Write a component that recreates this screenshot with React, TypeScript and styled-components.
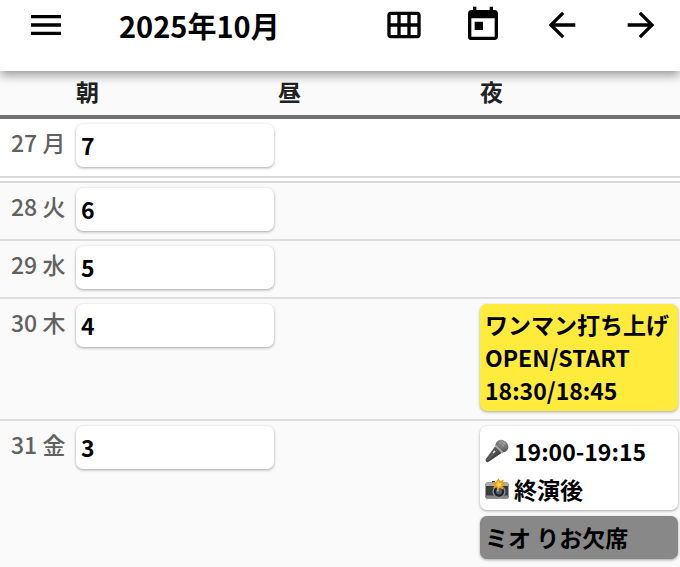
import React from 'react';
import styled, { createGlobalStyle } from 'styled-components';
import { MdArrowBack, MdArrowForward, MdCalendarViewMonth, MdMenu, MdToday } from 'react-icons/md';

const GlobalStyle = createGlobalStyle`
  * { box-sizing: border-box; }
  body {
    margin: 0;
    background: #fafafa;
    color: #000;
    font-family: "Noto Sans CJK JP", "Noto Sans", sans-serif;
    font-size: 23px;
    font-weight: 500;
    line-height: 33px;
  }
`;

const Page = styled.div`
  min-height: 100vh;
  overflow: hidden;
`;

const AppBar = styled.header`
  position: relative;
  z-index: 1;
  display: flex;
  align-items: center;
  padding: 0 0 21px 6px;
  background: #fff;
  box-shadow: 0 4px 10px rgba(0, 0, 0, 0.4);
`;

const IconButton = styled.button`
  display: flex;
  align-items: center;
  justify-content: center;
  width: 79px;
  height: 50px;
  padding: 0;
  border: 0;
  background: none;
  color: #000;
  font-size: 40px;
  cursor: pointer;
`;

const Title = styled.h1`
  flex: 1;
  margin: 0;
  padding-left: 34px;
  font-size: 29px;
  font-weight: 600;
  line-height: 44px;
  white-space: nowrap;
`;

const Calendar = styled.table`
  width: 100%;
  table-layout: fixed;
  border-collapse: separate;
  border-spacing: 0;
`;

const DateHead = styled.th`
  width: 74px;
  padding: 0;
  border-bottom: 4px solid #707070;
`;

const PeriodHead = styled.th`
  height: 48px;
  padding: 0 2px 3px;
  border-bottom: 4px solid #707070;
  color: #212121;
  font-weight: 600;
  text-align: left;
`;

const DateCell = styled.th`
  padding: 7px 0 0 11px;
  color: #616161;
  font-weight: 500;
  text-align: left;
  vertical-align: top;
  white-space: nowrap;
`;

const Slot = styled.td`
  padding: 5px 2px 8px;
  vertical-align: top;
`;

const DayRow = styled.tr<{ $today?: boolean }>`
  background: ${(p) => (p.$today ? '#fff' : '#fafafa')};

  > * {
    border-bottom: ${(p) => (p.$today ? '7px double #d8d8d8' : '2px solid #dedede')};
  }

  > ${Slot} {
    padding-bottom: ${(p) => (p.$today ? '9px' : '8px')};
  }

  &:last-child > * {
    border-bottom: 0;
  }
`;

const tones = { white: '#fff', yellow: '#ffeb3b', gray: '#888' };

const Card = styled.div<{ $tone?: keyof typeof tones; $compact?: boolean }>`
  padding: ${(p) => (p.$compact ? '4px 5px' : '5px')};
  border-radius: 7px;
  background: ${(p) => tones[p.$tone ?? 'white']};
  box-shadow: 0 1px 3px rgba(0, 0, 0, 0.35);
  font-weight: 600;
  white-space: nowrap;

  & + & {
    margin-top: 6px;
  }
`;

const Line = styled.div<{ $icon?: boolean }>`
  display: flex;
  align-items: center;
  gap: 5px;
  min-height: ${(p) => (p.$icon ? '38px' : '33px')};
  padding-top: ${(p) => (p.$icon ? '4px' : '0')};

  svg {
    flex: none;
  }
`;

function Microphone() {
  return (
    <svg width="24" height="24" viewBox="0 0 24 24" aria-hidden="true">
      <defs>
        <linearGradient id="mic-body" x1="0" y1="0" x2="1" y2="1">
          <stop offset="0" stopColor="#777" />
          <stop offset="1" stopColor="#222" />
        </linearGradient>
        <radialGradient id="mic-head" cx="0.4" cy="0.3" r="0.7">
          <stop offset="0" stopColor="#b5b5b5" />
          <stop offset="1" stopColor="#4a4a4a" />
        </radialGradient>
      </defs>
      <path d="M10 7.5.8 20q-.8 1.400.3 2.500 1.200 1.200 2.600.3L16.5 14Z" fill="url(#mic-body)" />
      <path d="M3 20.5 12 11" stroke="#777" strokeWidth="1" />
      <ellipse cx="17" cy="7" rx="6.7" ry="5.8" transform="rotate(40 17 7)" fill="url(#mic-head)" />
      <path d="m10 6 8 8" stroke="#a9a9a9" strokeWidth="1.8" />
      <path d="m13 4 8 7M15 2.5l7 6M14 9l5-7M17 11l5-6" stroke="#666" strokeWidth=".6" />
      <path d="m8 14 2-2" stroke="#ddd" strokeWidth="1.5" />
    </svg>
  );
}

function FlashCamera() {
  return (
    <svg width="24" height="24" viewBox="0 0 24 24" aria-hidden="true">
      <path d="M3 5.5h4V4h3v1.5h12q1.5 0 1.5 1.5v13q0 1.5-1.5 1.5H2Q.5 21.5.5 20V7Q.5 5.5 2 5.5Z" fill="#3c3c3c" />
      <path d="M.5 9V7Q.5 5.5 2 5.5h20q1.5 0 1.5 1.5v2Z" fill="#a9abad" />
      <path d="M.5 18.5h23V20q0 1.5-1.5 1.5H2Q.5 21.5.5 20Z" fill="#858585" />
      <circle cx="14" cy="14.5" r="6.5" fill="#8d9399" />
      <circle cx="14" cy="14.5" r="5.2" fill="#20242a" />
      <circle cx="14" cy="14.5" r="3" fill="#536273" />
      <circle cx="12.8" cy="13.5" r="1" fill="#b8c5d0" />
      <path d="m13.5 1 1.6 3.2 3.800-1.700-1 3.500 2.600 1.700-3 1.300.8 3.700-3.500-1.700-2.300 3-.8-3.400-3.700.4 2-3L7.500 5l3.700-.2Z" fill="#f39b18" />
      <path d="m13.6 4 1 2.200 2.200-.4-.9 1.900 1 1.700-2.100-.3-1.500 1.800-.6-2.200-2-.6 1.700-1.300Z" fill="#ffe052" />
    </svg>
  );
}

type Day = { date: string; morning: string; today?: boolean; night?: React.ReactNode };

const days: Day[] = [
  { date: '27 月', morning: '7', today: true },
  { date: '28 火', morning: '6' },
  { date: '29 水', morning: '5' },
  {
    date: '30 木',
    morning: '4',
    night: (
      <Card $tone="yellow" $compact>
        <Line>ワンマン打ち上げ</Line>
        <Line>OPEN/START</Line>
        <Line>18:30/18:45</Line>
      </Card>
    ),
  },
  {
    date: '31 金',
    morning: '3',
    night: (
      <>
        <Card $compact>
          <Line $icon><Microphone />19:00-19:15</Line>
          <Line $icon><FlashCamera />終演後</Line>
        </Card>
        <Card $tone="gray"><Line>ミオ りお欠席</Line></Card>
      </>
    ),
  },
];

export default function App() {
  return (
    <Page>
      <GlobalStyle />
      <AppBar>
        <IconButton aria-label="メニュー"><MdMenu /></IconButton>
        <Title>2025年10月</Title>
        <IconButton aria-label="月表示"><MdCalendarViewMonth /></IconButton>
        <IconButton aria-label="今日"><MdToday /></IconButton>
        <IconButton aria-label="前へ"><MdArrowBack /></IconButton>
        <IconButton aria-label="次へ"><MdArrowForward /></IconButton>
      </AppBar>
      <Calendar>
        <thead>
          <tr>
            <DateHead aria-label="日付" />
            <PeriodHead scope="col">朝</PeriodHead>
            <PeriodHead scope="col">昼</PeriodHead>
            <PeriodHead scope="col">夜</PeriodHead>
          </tr>
        </thead>
        <tbody>
          {days.map((day) => (
            <DayRow key={day.date} $today={day.today}>
              <DateCell scope="row">{day.date}</DateCell>
              <Slot><Card><Line>{day.morning}</Line></Card></Slot>
              <Slot />
              <Slot>{day.night}</Slot>
            </DayRow>
          ))}
        </tbody>
      </Calendar>
    </Page>
  );
}
